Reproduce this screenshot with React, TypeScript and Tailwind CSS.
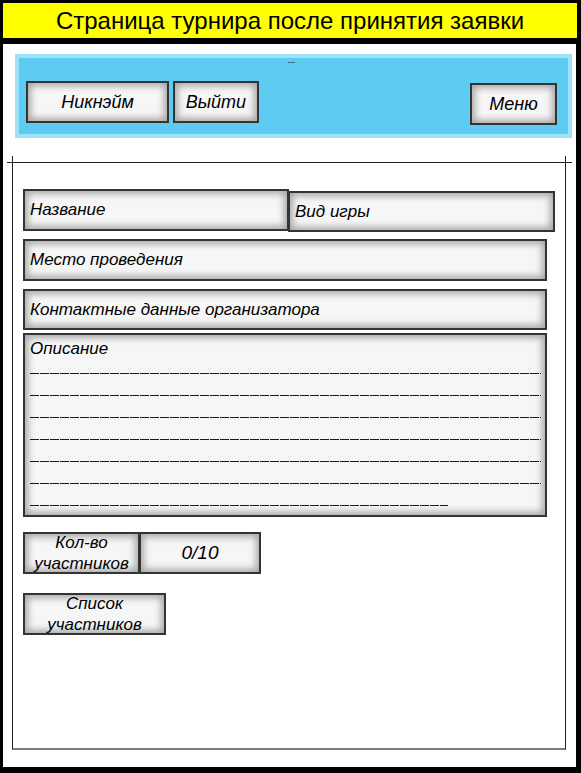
import React from 'react';

const font = "font-['Liberation_Sans',Arial,sans-serif]";
const boxStyle =
  'border-2 border-[#343434] bg-[#f6f6f6] shadow-[inset_0_0_7px_3px_rgba(0,0,0,0.32)] italic text-black';

const Box: React.FC<{ className?: string; children?: React.ReactNode }> = ({ className = '', children }) => (
  <div className={`${boxStyle} ${className}`}>{children}</div>
);

// dashed "underscore" rule used in the description box
const Rule: React.FC<{ className?: string }> = ({ className = '' }) => (
  <div className={`h-px bg-[repeating-linear-gradient(90deg,#1a1a1a_0_9px,transparent_9px_10px)] ${className}`} />
);

export default function App() {
  return (
    <div className={`w-[581px] h-[773px] bg-black pt-[3px] pl-[3px] pr-[5px] pb-[6px] flex flex-col ${font}`}>
      {/* title */}
      <div className="h-[35px] bg-[#ffff00] flex items-center justify-center text-[24px] text-black mr-[-1px]">
        Страница турнира после принятия заявки
      </div>

      <div className="mt-[6px] flex-1 bg-white flex flex-col">
        {/* header bar */}
        <div className="relative ml-[12px] mt-[10px] w-[557px] h-[84px] border-4 border-[#9fe1f8] bg-[#5ecbf3] flex items-start pt-[23px] pl-[7px] pr-[11px]">
          <div className="absolute left-[269px] top-[4px] w-[7px] h-px bg-[#3b6f86]" />
          <Box className="w-[143px] h-[42px] flex items-center justify-center text-[18px]">Никнэйм</Box>
          <Box className="ml-[4px] w-[86px] h-[42px] flex items-center justify-center text-[18px]">Выйти</Box>
          <Box className="ml-auto mt-[2px] w-[87px] h-[42px] flex items-center justify-center text-[18px]">Меню</Box>
        </div>

        {/* content frame */}
        <div className="ml-[9px] mt-[18px] w-[554px] h-[594px] border-l border-r border-[#1e1e1e] border-b-2 border-b-[#7a7a7a] pt-[6px] flex flex-col">
          <div className="h-px bg-[#1e1e1e] ml-[-6px] mr-[-7px]" />

          <div className="pl-[10px] pt-[26px] flex flex-col text-[17px]">
            <div className="flex items-start">
              <Box className="w-[266px] h-[42px] flex items-center pl-[5px]">Название</Box>
              <Box className="ml-[-1px] mt-[2px] w-[267px] h-[41px] flex items-center pl-[5px]">Вид игры</Box>
            </div>
            <Box className="mt-[7px] w-[524px] h-[42px] flex items-center pl-[5px]">Место проведения</Box>
            <Box className="mt-[8px] w-[524px] h-[41px] flex items-center pl-[5px]">Контактные данные организатора</Box>
            <Box className="mt-[3px] w-[524px] h-[184px] pl-[5px] pt-[3px] leading-[22px]">
              <div>Описание</div>
              <Rule className="mt-[13px] w-[511px]" />
              {[0, 1, 2, 3, 4].map(i => (
                <Rule key={i} className="mt-[21px] w-[511px]" />
              ))}
              <Rule className="mt-[21px] w-[418px]" />
            </Box>

            <div className="mt-[15px] flex">
              <Box className="w-[117px] h-[42px] flex flex-col items-center justify-center leading-[21px]">
                <span>Кол-во</span>
                <span>участников</span>
              </Box>
              <Box className="ml-[-1px] w-[122px] h-[42px] flex items-center justify-center text-[19px]">0/10</Box>
            </div>

            <Box className="mt-[19px] w-[143px] h-[42px] flex flex-col items-center justify-center leading-[21px]">
              <span>Список</span>
              <span>участников</span>
            </Box>
          </div>
        </div>
      </div>
    </div>
  );
}
